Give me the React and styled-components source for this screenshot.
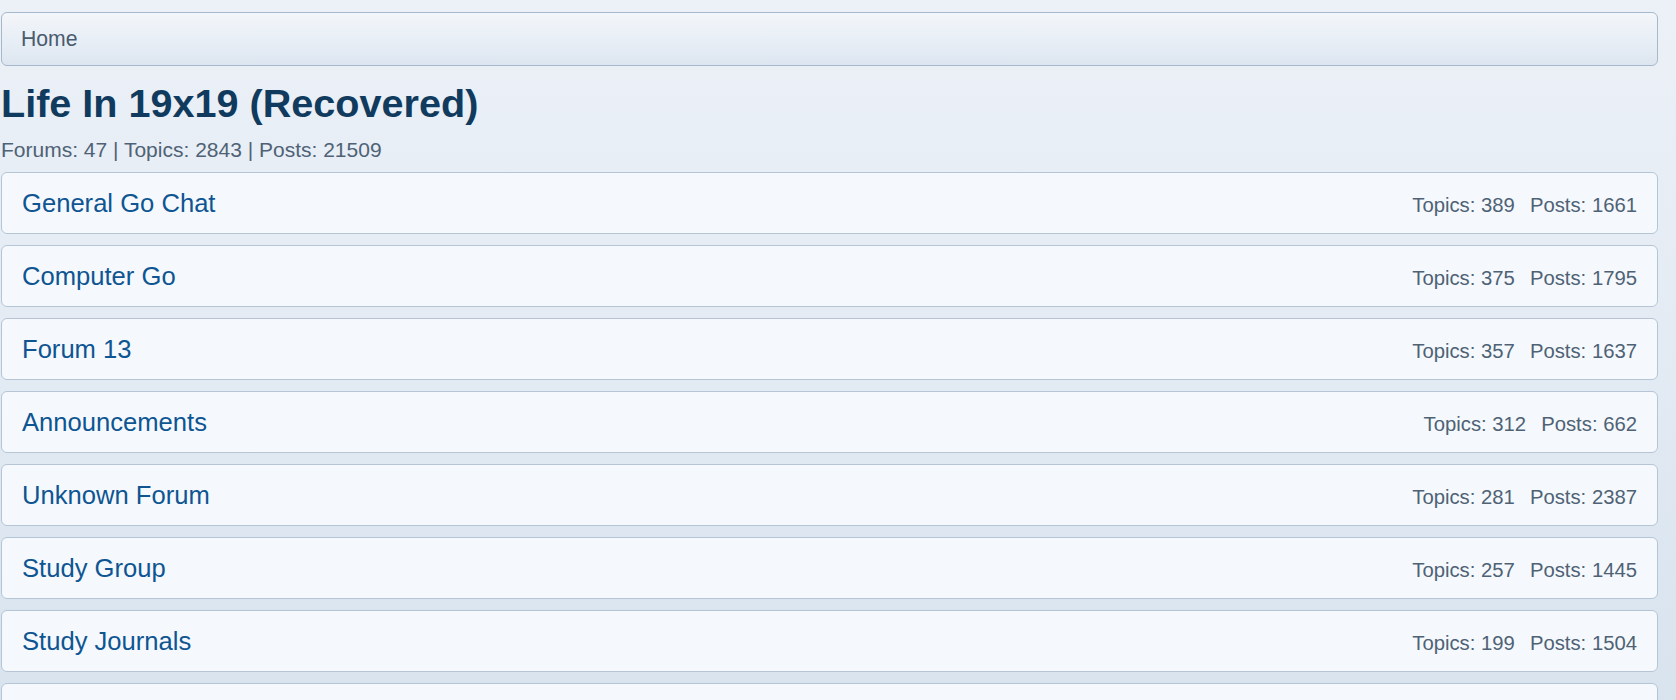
import React from "react";
import styled, { createGlobalStyle } from "styled-components";

const Global = createGlobalStyle`
  html, body { margin: 0; padding: 0; }
  body {
    min-height: 100vh;
    background: linear-gradient(180deg, #ecf1f7 0%, #e2eaf3 50%, #d6e2ed 100%);
    font-family: "Liberation Sans", Arial, sans-serif;
  }
`;

const Page = styled.div`
  width: 1657px;
  margin-left: 1px;
  padding-top: 12px;
  padding-bottom: 20px;
`;

const Breadcrumb = styled.nav`
  box-sizing: border-box;
  height: 54px;
  display: flex;
  align-items: center;
  padding: 0 19px;
  border: 1px solid #a6b8cc;
  border-radius: 6px;
  background: linear-gradient(180deg, #f3f6fa 0%, #e6edf5 60%, #dde6f0 100%);
  font-size: 21.2px;
  color: #4a5b6e;
`;

const Title = styled.h1`
  margin: 13px 0 0 0;
  font-size: 39.6px;
  line-height: 48px;
  font-weight: 700;
  color: #113b5e;
`;

const Summary = styled.div`
  margin-top: 11px;
  font-size: 21px;
  color: #4f6275;
`;

const List = styled.div`
  margin-top: 10px;
  display: flex;
  flex-direction: column;
  gap: 11px;
`;

const Row = styled.div`
  box-sizing: border-box;
  height: 62px;
  display: flex;
  align-items: center;
  justify-content: space-between;
  padding: 0 20px 0 20px;
  border: 1px solid #b5c5d6;
  border-radius: 6px;
  background: #f5f9fd;
`;

const Name = styled.a`
  font-size: 25.6px;
  color: #0e5592;
  text-decoration: none;
`;

const Stats = styled.div`
  display: flex;
  gap: 15px;
  margin-top: 4px;
  font-size: 20.3px;
  color: #4f6275;
`;

const forums = [
  ["General Go Chat", 389, 1661],
  ["Computer Go", 375, 1795],
  ["Forum 13", 357, 1637],
  ["Announcements", 312, 662],
  ["Unknown Forum", 281, 2387],
  ["Study Group", 257, 1445],
  ["Study Journals", 199, 1504],
  ["Off Topic", 180, 1420],
];

export default function App() {
  return (
    <>
      <Global />
      <Page>
        <Breadcrumb>Home</Breadcrumb>
        <Title>Life In 19x19 (Recovered)</Title>
        <Summary>Forums: 47 | Topics: 2843 | Posts: 21509</Summary>
        <List>
          {forums.map(([name, t, p]) => (
            <Row key={name}>
              <Name href="#">{name}</Name>
              <Stats>
                <span>Topics: {t}</span>
                <span>Posts: {p}</span>
              </Stats>
            </Row>
          ))}
        </List>
      </Page>
    </>
  );
}
